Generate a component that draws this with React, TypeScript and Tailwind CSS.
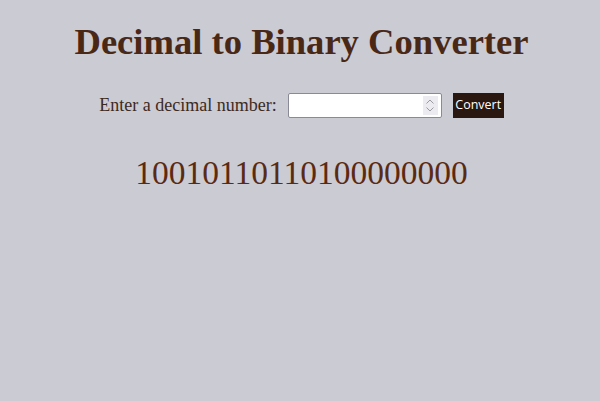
import React, { useState } from 'react';

export default function App() {
  const [value, setValue] = useState('');
  const [result, setResult] = useState('10010110110100000000');

  const convert = () => {
    const n = parseInt(value, 10);
    if (!isNaN(n)) setResult(n.toString(2));
  };

  return (
    <div className="min-h-[401px] bg-[#cbcbd3] font-['Liberation_Serif',serif] text-center pt-[19px] pl-[3px]">
      <h1 className="text-[36.6px] font-bold text-[#4a2816] leading-[46px]">Decimal to Binary Converter</h1>

      <div className="mt-[27px] flex items-center justify-center gap-[11px]">
        <label htmlFor="num" className="text-[18px] text-[#3d2a1d]">Enter a decimal number:</label>
        <div className="relative">
          <input
            id="num"
            type="number"
            value={value}
            onChange={(e) => setValue(e.target.value)}
            className="block w-[154px] h-[25px] bg-white border border-[#8a8a96] rounded-[2px] px-1 text-[14px] [appearance:textfield] [&::-webkit-inner-spin-button]:appearance-none"
          />
          {/* spinner */}
          <div className="pointer-events-none absolute right-[4px] top-[3px] w-[15px] h-[19px] bg-[#ececf0] flex flex-col items-center justify-center gap-[3px]">
            <svg width="8" height="5" viewBox="0 0 8 5" fill="none" stroke="#9a9aa2" strokeWidth="1">
              <path d="M0.5 4.5 L4 1 L7.5 4.5" />
            </svg>
            <svg width="8" height="5" viewBox="0 0 8 5" fill="none" stroke="#9a9aa2" strokeWidth="1">
              <path d="M0.5 0.5 L4 4 L7.5 0.5" />
            </svg>
          </div>
        </div>
        <button
          onClick={convert}
          className="h-[25px] w-[51px] bg-[#2a1710] text-white text-[12.5px] font-['Open_Sans',sans-serif]"
        >
          Convert
        </button>
      </div>

      <div className="mt-[35px] text-[33.5px] text-[#5a2a12] leading-[38px]">{result}</div>
    </div>
  );
}
